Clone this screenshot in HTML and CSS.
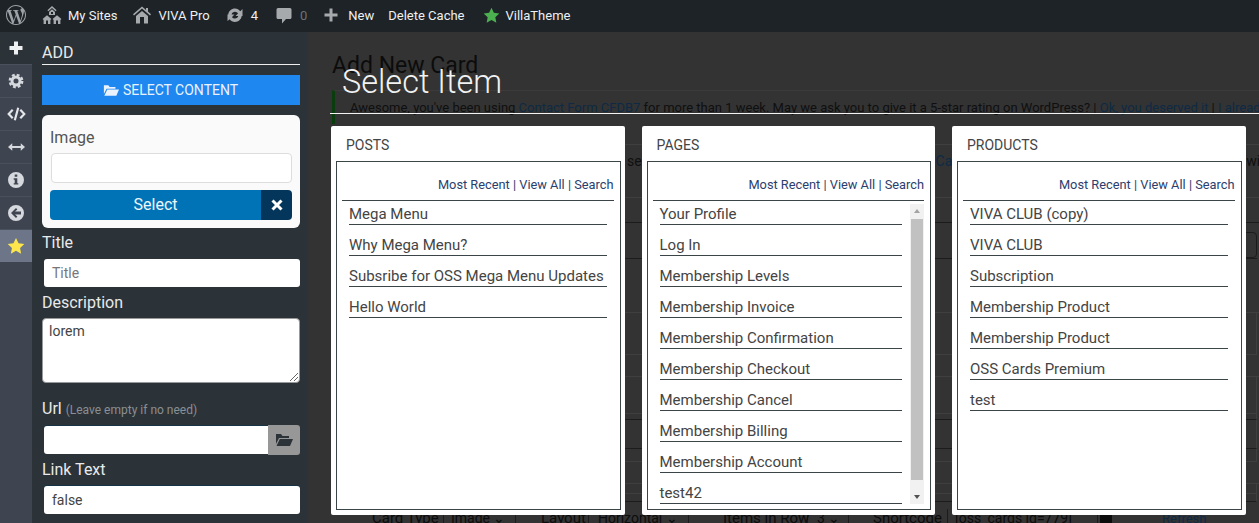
FILE: index.html
```html
<!DOCTYPE html>
<html lang="en">

<head>
    <meta charset="UTF-8">
    <meta name="viewport" content="width=device-width, initial-scale=1.0">
    <title>Add New Card</title>
    <link rel="stylesheet" href="styles.css">
</head>

<body>

    <div class="adminbar">
        <span class="bar-item bar-logo">
            <svg viewBox="0 0 24 24" width="24" height="24"><path fill="#9ca2a7" d="M12.158 12.786l-2.698 7.84c.806.236 1.657.365 2.54.365 1.047 0 2.051-.18 2.986-.51-.024-.037-.046-.078-.065-.123l-2.763-7.572zM3.009 12c0 3.559 2.068 6.634 5.067 8.092L3.788 8.341C3.289 9.459 3.009 10.696 3.009 12zm15.06-.454c0-1.112-.399-1.881-.741-2.48-.456-.741-.883-1.368-.883-2.109 0-.826.627-1.596 1.51-1.596.04 0 .078.005.116.007-1.598-1.464-3.73-2.36-6.071-2.36-3.141 0-5.904 1.612-7.512 4.053.211.007.41.011.579.011.94 0 2.396-.114 2.396-.114.484-.028.541.683.057.74 0 0-.487.058-1.029.086l3.274 9.739 1.968-5.901-1.401-3.838c-.484-.028-.943-.085-.943-.085-.485-.029-.428-.769.057-.741 0 0 1.484.114 2.368.114.94 0 2.397-.114 2.397-.114.485-.028.542.683.057.74 0 0-.488.058-1.029.086l3.25 9.665.897-2.996c.456-1.169.684-2.137.684-2.907zm1.82-3.86c.039.286.06.593.06.924 0 .912-.171 1.938-.684 3.22l-2.746 7.94c2.673-1.558 4.47-4.454 4.47-7.771 0-1.564-.399-3.034-1.1-4.314zM12 22C6.486 22 2 17.514 2 12S6.486 2 12 2s10 4.486 10 10-4.486 10-10 10z"/></svg>
        </span>
        <span class="bar-item bar-sites">
            <svg viewBox="0 0 20 20" width="20" height="20"><path fill="#a7aaad" fill-rule="evenodd" d="M10 1l4.600 4.200-1 1L10 3 6.400 6.200l-1-1zM10 4.300l3 2.700v3H7V7zM9 7v2h2V7zM5 10.200l4.400 3.900-1 1V19H1.600v-3.900l-1-1zM15 10.200l4.400 3.900-1 1V19h-6.800v-3.900l-1-1zM4 15.500V19h2v-3.500zM14 15.500V19h2v-3.500z"/></svg>
            <span>My Sites</span>
        </span>
        <span class="bar-item bar-home">
            <svg viewBox="0 0 20 20" width="20" height="20"><path fill="#a7aaad" fill-rule="evenodd" d="M10 1.500l4 3.400V3h2v3.600l3 2.600-1 1.200-8-6.900-8 6.900-1-1.200zM10 6l6 5v7.500H4V11zM8 12v6.500h4V12z"/></svg>
            <span>VIVA Pro</span>
        </span>
        <span class="bar-item bar-updates">
            <svg viewBox="0 0 20 20" width="20" height="20"><path fill="#a7aaad" d="M10 3.500c2.200 0 4.100 1.100 5.300 2.800L17.500 4v7h-7l2.500-2.500c-.6-1-1.700-1.700-3-1.700-1.600 0-3 1.100-3.400 2.700H3.200C3.700 6 6.500 3.500 10 3.500zM2.500 16V9.500h7L7 12c.6 1 1.700 1.600 3 1.600 1.600 0 2.900-1 3.300-2.500h3.400c-.5 3.500-3.300 5.800-6.700 5.800-2.200 0-4.100-1-5.300-2.700z"/></svg>
            <span>4</span>
        </span>
        <span class="bar-item bar-comments">
            <svg viewBox="0 0 20 20" width="20" height="20"><path fill="#a7aaad" d="M4 3h12a1.500 1.500 0 0 1 1.500 1.500v8A1.500 1.500 0 0 1 16 14h-4l-4 4.500V14H4a1.500 1.500 0 0 1-1.500-1.500v-8A1.500 1.500 0 0 1 4 3z"/></svg>
            <span class="muted-count">0</span>
        </span>
        <span class="bar-item bar-new">
            <svg viewBox="0 0 20 20" width="20" height="20"><path fill="#a7aaad" d="M8.500 3.500h3v5h5v3h-5v5h-3v-5h-5v-3h5z"/></svg>
            <span>New</span>
        </span>
        <span class="bar-item bar-cache">Delete Cache</span>
        <span class="bar-item bar-villa">
            <svg viewBox="0 0 20 20" width="17" height="17"><path fill="#4caf50" d="M10 1l2.800 5.900 6.400.8-4.700 4.400 1.200 6.400L10 15.400l-5.700 3.100 1.200-6.400L.8 7.700l6.400-.8z"/></svg>
            <span>VillaTheme</span>
        </span>
    </div>

    <div class="layout">
        <nav class="rail">
            <div class="rail-btn rail-top">
                <svg viewBox="0 0 16 16" width="16" height="16"><path fill="#eef0f2" d="M6 1.500h4V6h4.500v4H10v4.500H6V10H1.500V6H6z"/></svg>
            </div>
            <div class="rail-btn">
                <svg viewBox="0 0 16 16" width="16" height="16"><circle cx="8" cy="8" r="4" fill="none" stroke="#d5d8dd" stroke-width="3"/><circle cx="8" cy="8" r="6.200" fill="none" stroke="#d5d8dd" stroke-width="2.400" stroke-dasharray="2.800 2.070"/></svg>
            </div>
            <div class="rail-btn">
                <svg viewBox="0 0 20 16" width="19" height="16"><path fill="none" stroke="#e4e6ea" stroke-width="2.300" d="M6 3.500L1.800 8 6 12.500M14 3.500L18.200 8 14 12.500M11.800 1.500L8.200 14.500"/></svg>
            </div>
            <div class="rail-btn">
                <svg viewBox="0 0 18 16" width="17" height="16"><path fill="#d5d8dd" d="M4.500 4v3h9V4L18 8l-4.500 4V9h-9v3L0 8z"/></svg>
            </div>
            <div class="rail-btn">
                <svg viewBox="0 0 16 16" width="16" height="16"><path fill="#d5d8dd" fill-rule="evenodd" d="M8 0a8 8 0 1 1 0 16A8 8 0 0 1 8 0zM6.700 2.500v2.300h2.600V2.500zM5.700 6.300v1.500h1v3.400h-1v1.400h4.600v-1.400h-1V6.300z"/></svg>
            </div>
            <div class="rail-btn">
                <svg viewBox="0 0 16 16" width="16" height="16"><path fill="#d5d8dd" fill-rule="evenodd" d="M8 0a8 8 0 1 1 0 16A8 8 0 0 1 8 0zM8 3L3 8l5 5 1.400-1.400L7 9.500h6v-3H7l2.400-2.100z"/></svg>
            </div>
            <div class="rail-btn rail-active">
                <svg viewBox="0 0 20 20" width="18" height="18"><path fill="#fde74c" d="M10 1l2.800 5.900 6.400.8-4.700 4.400 1.200 6.400L10 15.400l-5.700 3.100 1.200-6.400L.8 7.700l6.400-.8z"/></svg>
            </div>
        </nav>

        <aside class="panel">
            <div class="panel-head">ADD</div>
            <div class="select-content">
                <svg viewBox="0 0 18 14" width="16" height="13"><path fill="#eaf3fd" d="M1 1h5l1.500 2H14v2H4L1 11zM4.800 6H18l-3 7H1.500z"/></svg>
                <span>SELECT CONTENT</span>
            </div>

            <div class="image-card">
                <div class="image-label">Image</div>
                <div class="image-input"></div>
                <div class="image-actions">
                    <span class="image-select">Select</span>
                    <span class="image-clear">
                        <svg viewBox="0 0 12 12" width="12" height="12"><path fill="none" stroke="#fff" stroke-width="3" d="M1.500 1.500l9 9M10.500 1.500l-9 9"/></svg>
                    </span>
                </div>
            </div>

            <label class="field-label label-title">Title</label>
            <div class="text-input placeholder">Title</div>

            <label class="field-label label-desc">Description</label>
            <div class="text-area">lorem
                <svg class="resize-grip" viewBox="0 0 8 8" width="8" height="8"><path fill="none" stroke="#666" d="M0 8l8-8M4 8l4-4"/></svg>
            </div>

            <label class="field-label label-url">Url <small>(Leave empty if no need)</small></label>
            <div class="url-row">
                <div class="text-input input-shade url-input"></div>
                <span class="url-btn">
                    <svg viewBox="0 0 18 14" width="18" height="14"><path fill="#2c3338" d="M1 1h5l1.500 2H14v2H4L1 11zM4.800 6H18l-3 7H1.500z"/></svg>
                </span>
            </div>

            <label class="field-label label-link">Link Text</label>
            <div class="text-input input-shade">false</div>
        </aside>

        <main class="workspace">
            <h1 class="page-title">Add New Card</h1>
            <div class="notice">Awesome, you've been using <a>Contact Form CFDB7</a> for more than 1 week. May we ask you to give it a 5-star rating on WordPress? | <a>Ok, you deserved it</a> | <a>I already did</a></div>

            <div class="bg-rows">
                <div class="bg-row"></div>
                <div class="bg-row bg-row-text"><span class="frag-a">se '</span><a class="frag-b">Ca</a><span class="frag-c">wi</span></div>
                <div class="bg-row bg-row-dark"></div>
                <div class="bg-row bg-row-dark bg-row-field"><span class="bg-field"></span></div>
                <div class="bg-row"></div>
                <div class="bg-row bg-row-edge"></div>
                <div class="bg-row"></div>
                <div class="bg-row bg-row-edge"></div>
                <div class="bg-row bg-row-dark bg-row-edge"></div>
                <div class="bg-row bg-row-dark bg-row-edge"></div>
                <div class="bg-row bg-row-edge"></div>
                <div class="bg-row"></div>
                <div class="bg-row bg-row-edge"></div>
                <div class="bg-row bg-row-dark bg-row-edge"></div>
            </div>

            <div class="card-options">
                <span class="opt-label opt-type">Card Type</span><span class="opt-value val-type">Image ⌄</span>
                <span class="opt-label opt-layout">Layout</span><span class="opt-value val-layout">Horizontal ⌄</span>
                <span class="opt-label opt-items">Items in Row</span><span class="opt-value val-items">3 ⌄</span>
                <span class="opt-label opt-code">Shortcode</span><span class="opt-value val-code">[oss_cards id=779]</span>
                <span class="opt-copy"></span>
                <a class="opt-refresh">Refresh</a>
            </div>

            <div class="picker">
                <div class="picker-title">Select Item</div>
                <div class="picker-cols">
                    <section class="picker-col">
                        <div class="col-name">POSTS</div>
                        <div class="col-box">
                            <div class="col-links"><a>Most Recent</a> | <a>View All</a> | <a>Search</a></div>
                            <ul class="col-list">
                                <li>Mega Menu</li>
                                <li>Why Mega Menu?</li>
                                <li>Subsribe for OSS Mega Menu Updates</li>
                                <li>Hello World</li>
                            </ul>
                        </div>
                    </section>

                    <section class="picker-col">
                        <div class="col-name">PAGES</div>
                        <div class="col-box">
                            <div class="col-links"><a>Most Recent</a> | <a>View All</a> | <a>Search</a></div>
                            <div class="scroll-wrap">
                                <ul class="col-list list-scroll">
                                    <li>Your Profile</li>
                                    <li>Log In</li>
                                    <li>Membership Levels</li>
                                    <li>Membership Invoice</li>
                                    <li>Membership Confirmation</li>
                                    <li>Membership Checkout</li>
                                    <li>Membership Cancel</li>
                                    <li>Membership Billing</li>
                                    <li>Membership Account</li>
                                    <li>test42</li>
                                </ul>
                                <div class="scrollbar">
                                    <span class="arrow-up"></span>
                                    <span class="scroll-thumb"></span>
                                    <span class="arrow-down"></span>
                                </div>
                            </div>
                        </div>
                    </section>

                    <section class="picker-col">
                        <div class="col-name">PRODUCTS</div>
                        <div class="col-box">
                            <div class="col-links"><a>Most Recent</a> | <a>View All</a> | <a>Search</a></div>
                            <ul class="col-list">
                                <li>VIVA CLUB (copy)</li>
                                <li>VIVA CLUB</li>
                                <li>Subscription</li>
                                <li>Membership Product</li>
                                <li>Membership Product</li>
                                <li>OSS Cards Premium</li>
                                <li>test</li>
                            </ul>
                        </div>
                    </section>
                </div>
            </div>
        </main>
    </div>

</body>
</html>
```

FILE: styles.css
```css
html,
body {
    margin: 0;
    height: 523px;
    overflow: hidden;
}

body {
    font-family: Roboto, "Liberation Sans", sans-serif;
    background-color: #333;
    color: #111;
}

.adminbar {
    display: flex;
    align-items: center;
    height: 32px;
    padding-bottom: 2px;
    box-sizing: border-box;
    background-color: #1d2327;
    color: #eef0f1;
    font-size: 13px;
}

.bar-item {
    display: flex;
    align-items: center;
    gap: 6px;
}

.bar-logo { margin-left: 4px; }
.bar-sites { margin-left: 14px; }
.bar-home { margin-left: 15px; }
.bar-updates { margin-left: 15px; }
.bar-comments { margin-left: 16px; }
.bar-new { margin-left: 14px; gap: 7px; }
.bar-cache { margin-left: 14px; }
.bar-villa { margin-left: 18px; gap: 6px; }

.muted-count {
    color: #6d7276;
}

.layout {
    display: flex;
    height: 491px;
}

.rail {
    width: 32px;
    flex: none;
    background-color: #3f4451;
}

.rail-btn {
    display: flex;
    align-items: center;
    justify-content: center;
    height: 31px;
    padding-bottom: 1px;
    border-top: 1px solid #4b505d;
}

.rail-top {
    height: 32px;
    padding: 0;
    border-top: 0;
    background-color: #2c3338;
}

.rail-active {
    background-color: #6d7689;
}

.panel {
    width: 258px;
    flex: none;
    padding: 0 8px 0 10px;
    background-color: #2c3338;
    color: #e8eaeb;
    font-size: 16px;
}

.panel-head {
    height: 33px;
    line-height: 42px;
    border-bottom: 1px solid #eee;
    box-sizing: border-box;
    margin-bottom: 10px;
}

.select-content {
    display: flex;
    align-items: center;
    justify-content: center;
    gap: 4px;
    height: 30px;
    padding-right: 1px;
    box-sizing: border-box;
    background-color: #1e87f0;
    color: #eaf3fd;
    font-size: 14px;
}

.image-card {
    margin-top: 10px;
    height: 113px;
    padding: 0 8px;
    box-sizing: border-box;
    background-color: #fafafa;
    border-radius: 6px;
    color: #555;
}

.image-label {
    padding-top: 13px;
    height: 38px;
    box-sizing: border-box;
    line-height: 19px;
}

.image-input {
    height: 30px;
    margin-left: 1px;
    box-sizing: border-box;
    background-color: #fff;
    border: 1px solid #ddd;
    border-radius: 4px;
}

.image-actions {
    display: flex;
    height: 30px;
    margin-top: 7px;
    border-radius: 4px;
    overflow: hidden;
    color: #eef6fb;
}

.image-select {
    flex: 1;
    text-align: center;
    line-height: 29px;
    background-color: #0073b7;
}

.image-clear {
    display: flex;
    align-items: center;
    justify-content: center;
    width: 31px;
    background-color: #04355b;
}

.field-label {
    display: block;
    line-height: 24px;
}

.label-title {
    margin-top: 3px;
    height: 28px;
}

.label-desc {
    margin-top: 4px;
    height: 27px;
}

.label-url {
    margin-top: 14px;
    height: 28px;
}

.label-url small {
    font-size: 12px;
    color: #8a8f93;
}

.label-link {
    margin-top: 3px;
    height: 28px;
}

.text-input {
    height: 28px;
    margin-left: 2px;
    padding-left: 8px;
    line-height: 28px;
    font-size: 14px;
    background-color: #fff;
    border-radius: 3px;
    color: #444;
}

.input-shade {
    box-shadow: 0 -1px 0 #173447;
}

.placeholder {
    color: #777;
}

.text-area {
    position: relative;
    height: 65px;
    padding: 4px 6px;
    box-sizing: border-box;
    background-color: #fff;
    border: 1px solid #999;
    border-radius: 4px;
    font-size: 14px;
    line-height: 16px;
    color: #444;
}

.resize-grip {
    position: absolute;
    right: 1px;
    bottom: 1px;
}

.url-row {
    display: flex;
    align-items: center;
}

.url-input {
    flex: 1;
    border-radius: 3px 0 0 3px;
}

.url-btn {
    display: flex;
    align-items: center;
    justify-content: center;
    width: 32px;
    height: 30px;
    background-color: #979797;
    border-radius: 0 3px 3px 0;
}

/* page behind the dialog */
.workspace {
    position: relative;
    flex: 1;
    min-width: 0;
    padding-left: 24px;
    background-color: #333;
    overflow: hidden;
}

.page-title {
    margin: 20px 0 0;
    font-size: 23px;
    line-height: 27px;
    font-weight: 400;
    color: #0c0c0c;
}

.notice {
    height: 33px;
    margin-top: 11px;
    padding-left: 15px;
    border-left: 3px solid #0a3d0e;
    border-top: 1px solid #3b3b3b;
    font-size: 13px;
    line-height: 33px;
    white-space: nowrap;
    color: #0f0f0f;
}

.notice a,
.frag-b,
.opt-refresh {
    color: #0e2a44;
}

.bg-rows {
    display: grid;
    grid-template-rows: 21px 53px 25px 36px 54px 42px 22px 37px 6px 29px 13px 22px 10px 8px;
}

.bg-row {
    border-bottom: 1px solid #3f3f3f;
    box-sizing: border-box;
}

.bg-row-dark {
    border-bottom-color: #1c1c1c;
}

.bg-row-edge {
    margin-right: 3px;
    border-right: 1px solid #3f3f3f;
}

.bg-row-text {
    padding-top: 8px;
    font-size: 14px;
    line-height: 16px;
    white-space: nowrap;
    color: #0f0f0f;
}

.frag-a { margin-left: 295px; }
.frag-b { margin-left: 288px; }
.frag-c { margin-left: 294px; }

.bg-row-field {
    display: flex;
    justify-content: flex-end;
    align-items: flex-end;
    margin-right: 3px;
}

.bg-field {
    width: 40px;
    height: 26px;
    box-sizing: border-box;
    border: 1px solid #1c1c1c;
    border-radius: 4px;
}

.card-options {
    display: flex;
    align-items: center;
    height: 24px;
    margin-top: 4px;
    white-space: nowrap;
    font-size: 14px;
    color: #0c0c0c;
}

.opt-label {
    flex: none;
    padding-right: 3px;
    border-right: 1px solid #1c1c1c;
    font-size: 15px;
}

.opt-value {
    flex: none;
    box-sizing: border-box;
    border-right: 1px solid #1c1c1c;
}

.opt-type { margin-left: 40px; width: 68px; }
.val-type { margin-left: 7px; width: 65px; }
.opt-layout { margin-left: 25px; width: 44px; }
.val-layout { margin-left: 9px; width: 91px; }
.opt-items { margin-left: 34px; width: 81px; }
.val-items { margin-left: 9px; width: 32px; }
.opt-code { margin-left: 24px; width: 71px; }
.val-code { margin-left: 7px; width: 143px; }

.opt-copy {
    flex: none;
    width: 12px;
    height: 14px;
    margin-left: 2px;
    background-color: #0c0c0c;
}

.opt-refresh {
    margin-left: 50px;
    font-size: 13px;
}

/* select item dialog */
.picker {
    position: absolute;
    left: 22px;
    right: 0;
    top: 0;
}

.picker-title {
    height: 82px;
    box-sizing: border-box;
    padding: 30px 0 0 12px;
    border-bottom: 1px solid #f3f3f3;
    font-size: 32.5px;
    line-height: 40px;
    font-weight: 300;
    color: #f2f2f2;
}

.picker-cols {
    display: flex;
    gap: 17px;
    margin: 12px 0 0 1px;
}

.picker-col {
    width: 293.5px;
    height: 389px;
    padding: 0 5px 5px;
    box-sizing: border-box;
    display: flex;
    flex-direction: column;
    background-color: #fff;
    border-radius: 2px;
}

.col-name {
    height: 35px;
    padding-left: 10px;
    line-height: 39px;
    font-size: 14px;
    color: #444;
}

.col-box {
    flex: 1;
    min-height: 0;
    margin-right: -1px;
    padding: 0 6px 0 5px;
    box-sizing: border-box;
    border: 1px solid #3b4446;
}

.col-links {
    height: 39px;
    box-sizing: border-box;
    padding-top: 15px;
    line-height: 15px;
    text-align: right;
    font-size: 12.8px;
    color: #2b3e6e;
    border-bottom: 1px solid #3b4446;
}

.col-list {
    margin: 0;
    padding: 0 7px;
    list-style: none;
}

.col-list li {
    height: 24px;
    margin-bottom: 7px;
    line-height: 27px;
    font-size: 15px;
    color: #444;
    border-bottom: 1px solid #3b4446;
    box-sizing: border-box;
    white-space: nowrap;
}

.scroll-wrap {
    display: flex;
    gap: 1px;
}

.list-scroll {
    flex: 1;
    min-width: 0;
    height: 303px;
    overflow: hidden;
}

.scrollbar {
    position: relative;
    width: 14px;
    height: 300px;
    flex: none;
    margin-top: 3px;
    background-color: #f1f1f1;
}

.scroll-thumb {
    position: absolute;
    left: 1px;
    right: 1px;
    top: 15px;
    height: 261px;
    background-color: #c1c1c1;
}

.arrow-up,
.arrow-down {
    position: absolute;
    left: 4px;
    width: 0;
    height: 0;
    border-left: 3px solid transparent;
    border-right: 3px solid transparent;
}

.arrow-up {
    top: 5px;
    border-bottom: 4px solid #a3a3a3;
}

.arrow-down {
    bottom: 5px;
    border-top: 4px solid #505050;
}
```
